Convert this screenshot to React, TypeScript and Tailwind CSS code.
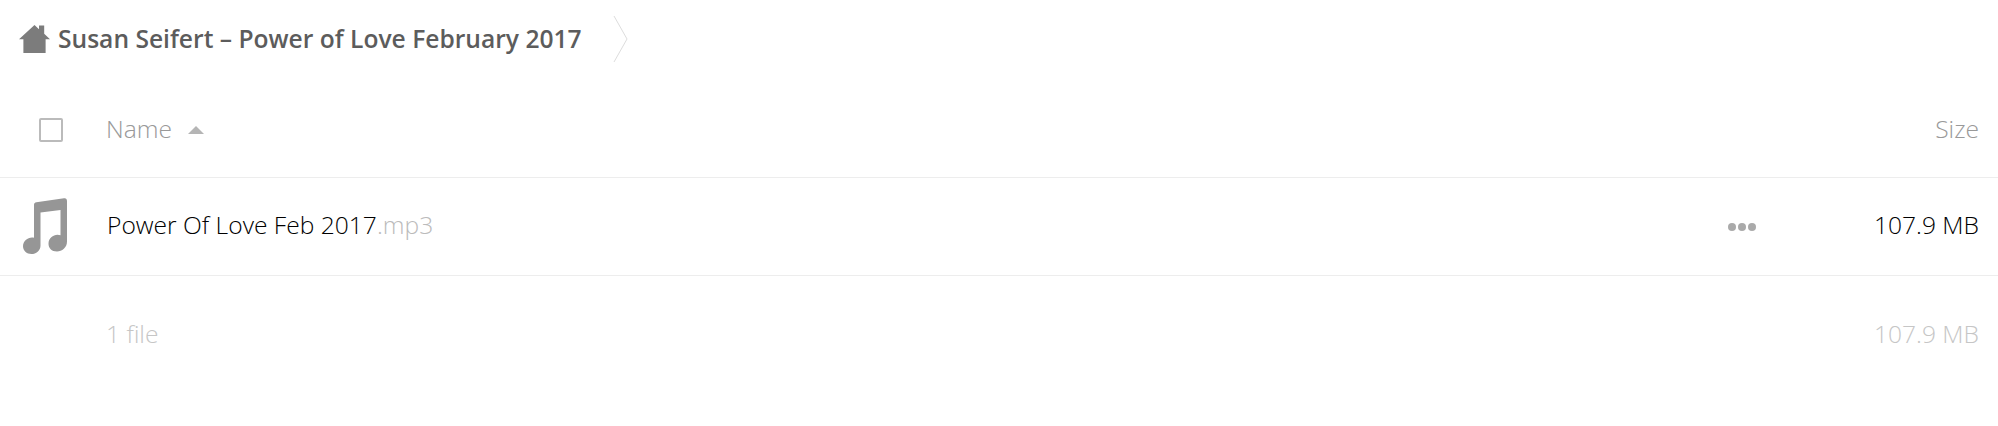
export default function App() {
  return (
    <div className="h-[426px] w-[1998px] overflow-hidden bg-white font-['Open_Sans',sans-serif] font-light text-[24.6px]">
      {/* breadcrumb */}
      <div className="flex h-[77px] items-center">
        <svg className="ml-[19px] h-[28px] w-[31px] shrink-0" viewBox="0 0 24 24" fill="#7c7c7c" preserveAspectRatio="none">
          <path d="M12 0 L15.5 3.6 V0.5 H19.5 V7.6 L24 12.2 H20.6 V24 H3.4 V12.2 H0 Z" />
        </svg>
        <span className="ml-[8px] mt-[1px] text-[24.6px] leading-none font-semibold text-[#5c5c5c]">Susan Seifert – Power of Love February 2017</span>
        <svg className="ml-[31px] h-[48px] w-[15px] shrink-0" viewBox="0 0 15 48" fill="none" stroke="#ddd">
          <path d="M1 1 L14 24 L1 47" />
        </svg>
      </div>

      {/* header */}
      <div className="flex h-[101px] items-center border-b border-[#ededed] pt-[5px]">
        <div className="ml-[39px] h-[24px] w-[24px] shrink-0 rounded-[2px] border-2 border-[#bbb]" />
        <span className="ml-[43px] text-[#999]">Name</span>
        <span className="ml-[16px] h-0 w-0 border-x-[8px] border-b-[8px] border-x-transparent border-b-[#b5b5b5]" />
        <span className="mr-[19px] ml-auto text-[#999]">Size</span>
      </div>

      {/* file row */}
      <div className="flex h-[98px] items-center border-b border-[#ededed]">
        <svg className="ml-[23px] mb-[2px] h-[56px] w-[44px] shrink-0" viewBox="0 0 44 54" fill="#969696" preserveAspectRatio="none">
          <path d="M11 6.5 C11 5 12 4.2 13.4 4 L41 0.3 C43 0 44 1 44 3 V42 C44 48 39 51.5 34 51.5 C28.5 51.5 25.5 48 25.5 44 C25.5 39 30 35.5 34.5 35.5 C35.5 35.5 36.5 35.7 37.5 36 V11.5 L17.5 14 V46 C17.5 50.5 13 54 8.5 54 C3.5 54 0 50.5 0 46.5 C0 41.5 4.5 38 9 38 C9.5 38 10.5 38.1 11 38.3 Z" />
        </svg>
        <span className="ml-[40px] mb-[2px] whitespace-nowrap text-black">
          Power Of Love Feb 2017<span className="text-[#bbb]">.mp3</span>
        </span>
        <span className="ml-auto flex gap-[2px]">
          <i className="size-[8px] rounded-full bg-[#aaa]" />
          <i className="size-[8px] rounded-full bg-[#aaa]" />
          <i className="size-[8px] rounded-full bg-[#aaa]" />
        </span>
        <span className="mr-[19px] ml-[118px] mb-[2px] whitespace-nowrap text-black">107.9 MB</span>
      </div>

      {/* summary */}
      <div className="flex h-[108px] items-center pt-[8px] text-[#c6c6c6]">
        <span className="ml-[106px]">1 file</span>
        <span className="mr-[19px] ml-auto">107.9 MB</span>
      </div>
    </div>
  );
}
